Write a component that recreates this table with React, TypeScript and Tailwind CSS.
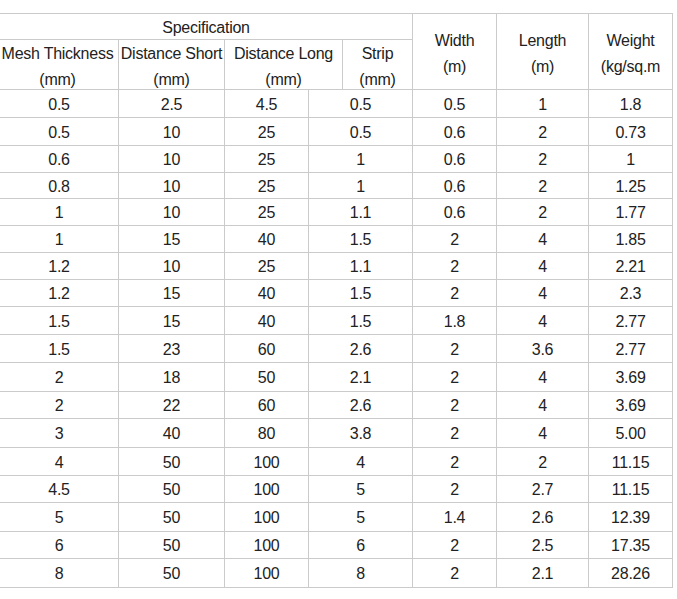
const rows: string[][] = [
  ['0.5', '2.5', '4.5', '0.5', '0.5', '1', '1.8'],
  ['0.5', '10', '25', '0.5', '0.6', '2', '0.73'],
  ['0.6', '10', '25', '1', '0.6', '2', '1'],
  ['0.8', '10', '25', '1', '0.6', '2', '1.25'],
  ['1', '10', '25', '1.1', '0.6', '2', '1.77'],
  ['1', '15', '40', '1.5', '2', '4', '1.85'],
  ['1.2', '10', '25', '1.1', '2', '4', '2.21'],
  ['1.2', '15', '40', '1.5', '2', '4', '2.3'],
  ['1.5', '15', '40', '1.5', '1.8', '4', '2.77'],
  ['1.5', '23', '60', '2.6', '2', '3.6', '2.77'],
  ['2', '18', '50', '2.1', '2', '4', '3.69'],
  ['2', '22', '60', '2.6', '2', '4', '3.69'],
  ['3', '40', '80', '3.8', '2', '4', '5.00'],
  ['4', '50', '100', '4', '2', '2', '11.15'],
  ['4.5', '50', '100', '5', '2', '2.7', '11.15'],
  ['5', '50', '100', '5', '1.4', '2.6', '12.39'],
  ['6', '50', '100', '6', '2', '2.5', '17.35'],
  ['8', '50', '100', '8', '2', '2.1', '28.26'],
]

const cell = 'flex items-center justify-center text-center border-r border-b border-[#cbcbcb]'

function Head({ children, className = '' }: { children: React.ReactNode; className?: string }) {
  return <div className={`${cell} flex-col leading-[25.5px] ${className}`}>{children}</div>
}

export default function App() {
  return (
    <div className="bg-white w-[677px] h-[599px] pt-[13px] font-['Liberation_Sans',Arial,sans-serif] text-[16px] tracking-[-0.25px] text-[#222]">
      <div className="grid w-[673px] border-t border-[#cbcbcb] grid-cols-[119px_106px_84px_34px_70px_84px_92px_84px] grid-rows-[26px_50px_28px_28px_27px_26px_27px_27px_27px_27px_28px_28px_29px_27px_29px_28px_27px_29px_27px_29px]">
        <Head className="col-span-5 pt-[3px]">Specification</Head>
        <Head className="row-span-2 pt-[4px]">
          <span>Width</span>
          <span>(m)</span>
        </Head>
        <Head className="row-span-2 pt-[4px]">
          <span>Length</span>
          <span>(m)</span>
        </Head>
        <Head className="row-span-2 pt-[4px]">
          <span>Weight</span>
          <span>(kg/sq.m</span>
        </Head>
        <Head className="whitespace-nowrap pt-[4px] pr-[3px]">
          <span>Mesh Thickness</span>
          <span>(mm)</span>
        </Head>
        <Head className="whitespace-nowrap pt-[4px]">
          <span>Distance Short</span>
          <span>(mm)</span>
        </Head>
        <Head className="col-span-2 whitespace-nowrap pt-[4px]">
          <span>Distance Long</span>
          <span>(mm)</span>
        </Head>
        <Head className="pt-[4px]">
          <span>Strip</span>
          <span>(mm)</span>
        </Head>
        {rows.map((r, i) =>
          r.map((v, j) => (
            <div key={`${i}-${j}`} className={j === 3 ? `${cell} col-span-2 pt-[2px]` : `${cell} pt-[2px]`}>
              {v}
            </div>
          ))
        )}
      </div>
    </div>
  )
}
